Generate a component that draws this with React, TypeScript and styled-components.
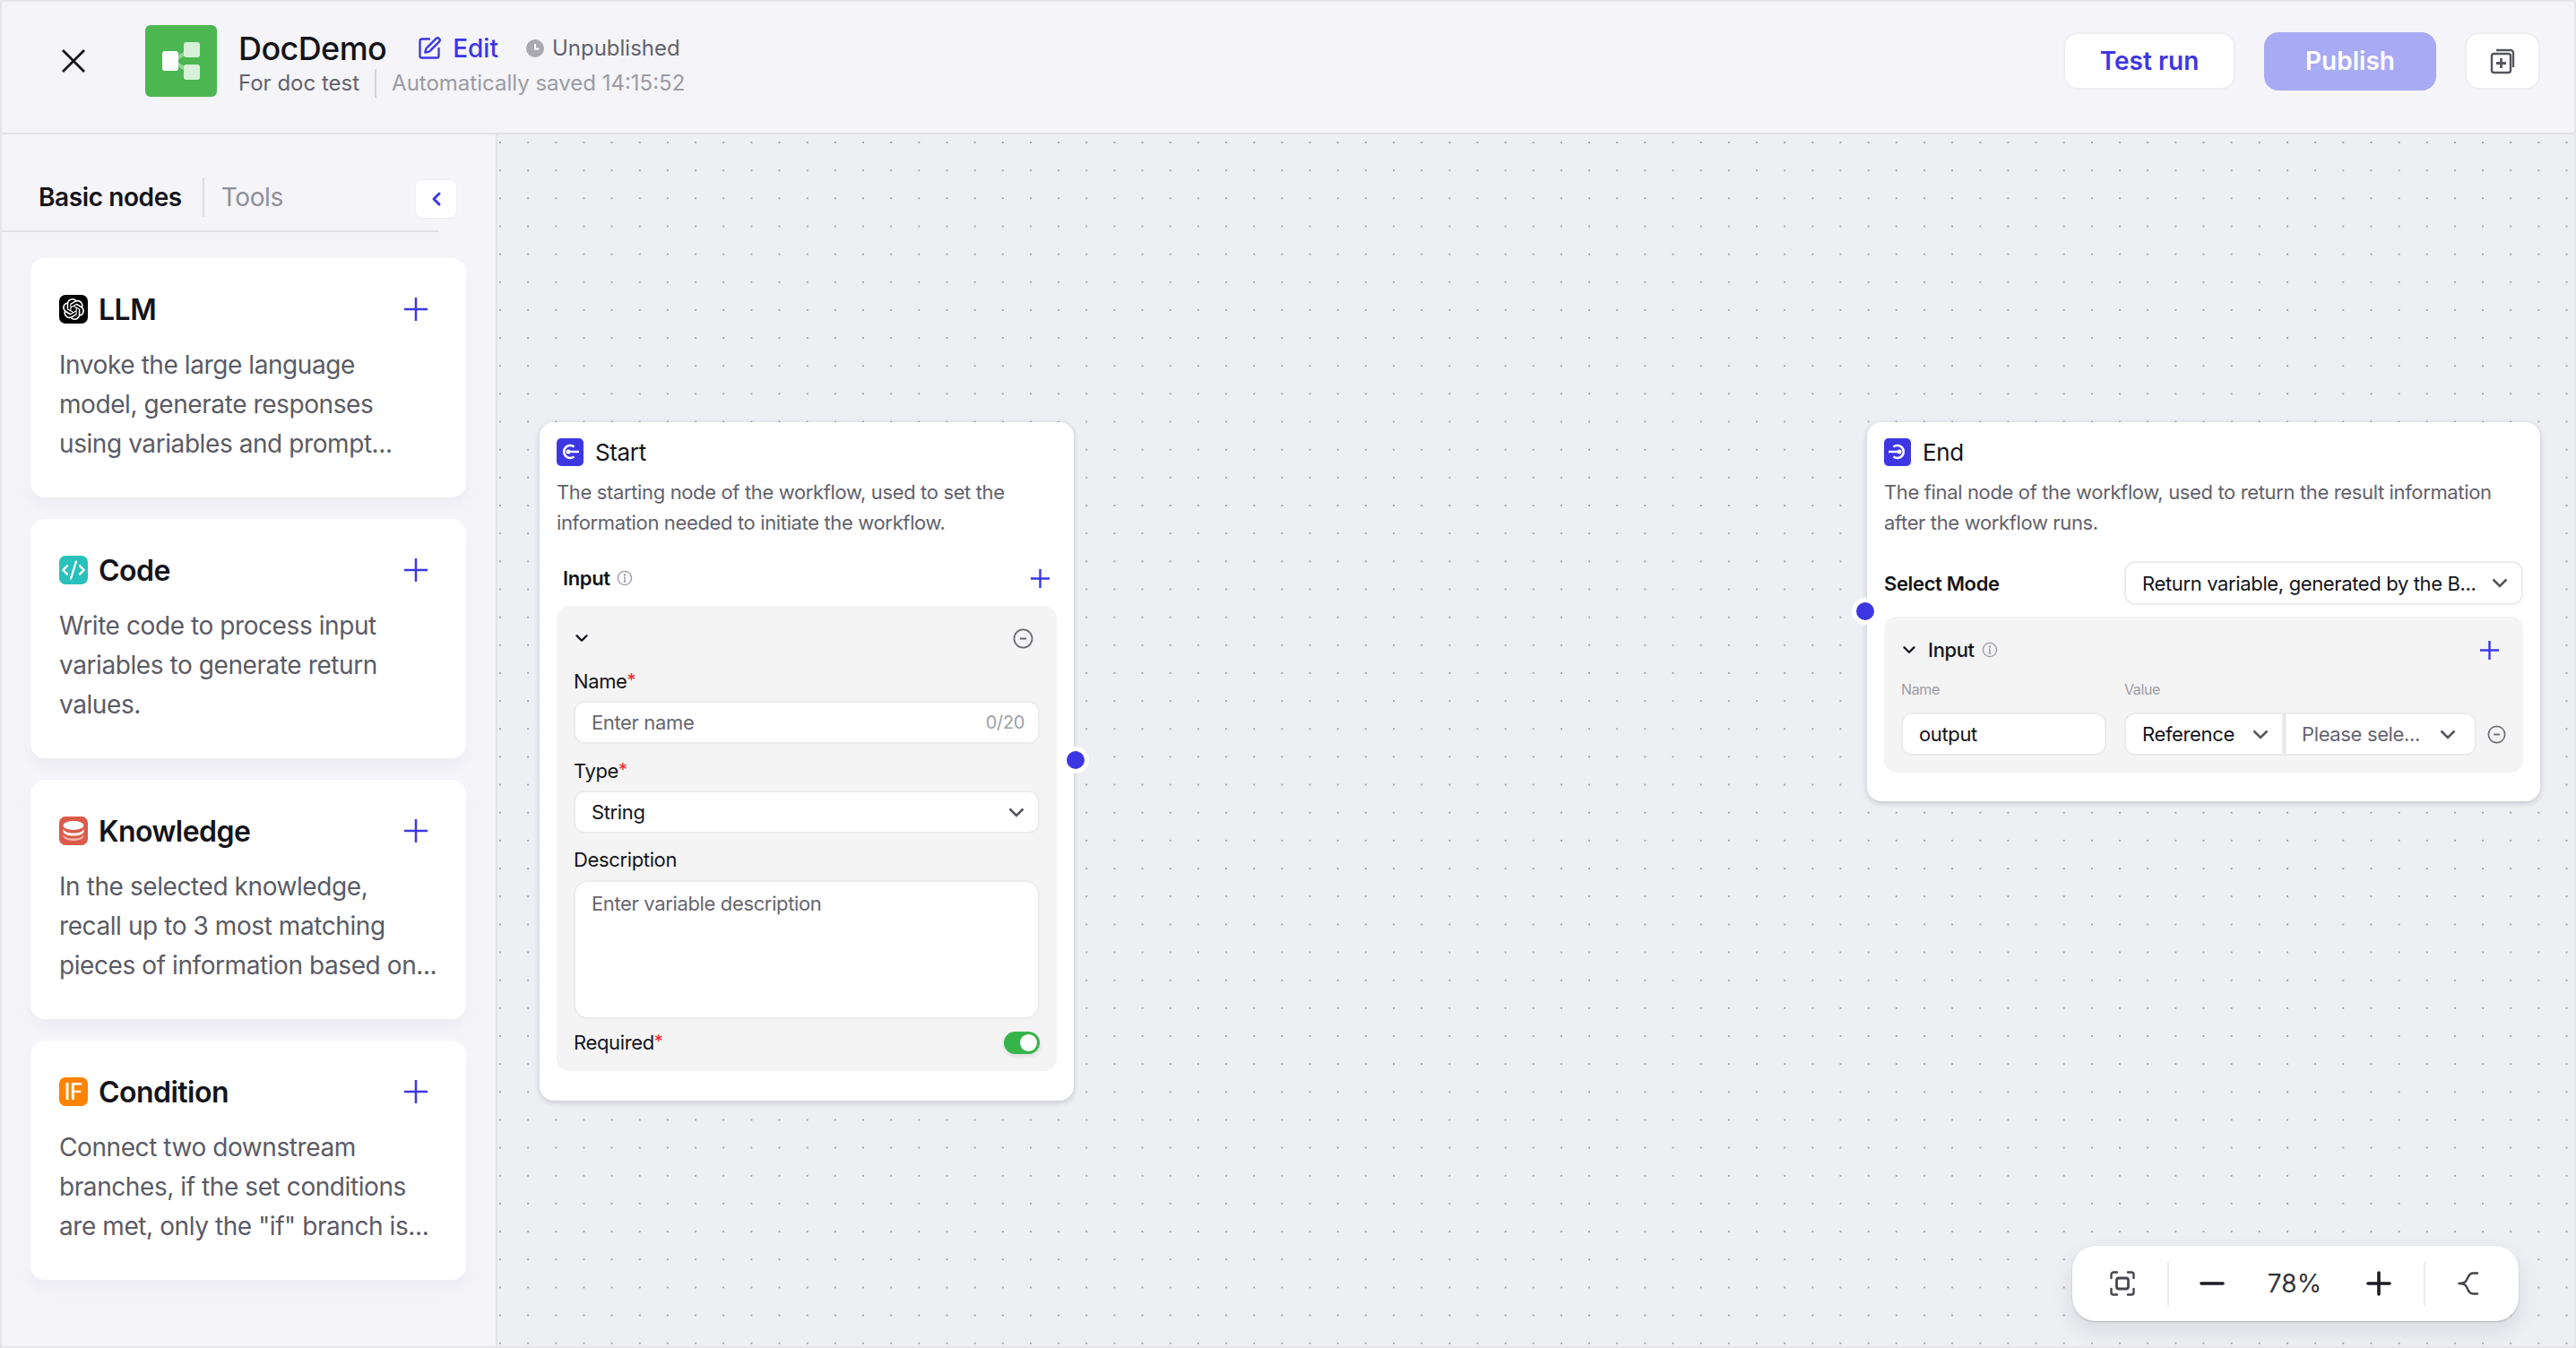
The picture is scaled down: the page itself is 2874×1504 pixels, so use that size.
import React from "react";
import styled, { createGlobalStyle } from "styled-components";
import { ChevronDown, ChevronLeft, CodeXml, SquarePen } from "lucide-react";
import { SiOpenai } from "react-icons/si";

const BLUE = "#3d37e3";

const GlobalStyle = createGlobalStyle`
  * { box-sizing: border-box; }
  html, body { margin: 0; padding: 0; background: #f4f4f9; }
  body { font-family: Inter, "Noto Sans", sans-serif; color: #14141a; }
`;

const Frame = styled.div`
  width: 2874px;
  height: 1504px;
  border: 2px solid #e6e6ea;
  display: flex;
  flex-direction: column;
  overflow: hidden;
`;

/* header */
const Header = styled.header`
  height: 148px;
  flex: none;
  display: flex;
  align-items: center;
  padding: 0 38px 14px 66px;
  background: #f4f4f9;
  border-bottom: 2px solid #e2e2e7;
`;

const CloseIcon = styled.svg`
  width: 28px;
  height: 28px;
  flex: none;
  margin-right: 66px;
`;

const Logo = styled.div`
  width: 80px;
  height: 80px;
  flex: none;
  border-radius: 6px;
  background: #4cb751;
  display: flex;
  align-items: center;
  justify-content: center;
`;

const TitleBlock = styled.div`
  margin: 10px 0 0 24px;
  display: flex;
  flex-direction: column;
  gap: 3px;
`;

const TitleRow = styled.div`
  height: 36px;
  display: flex;
  align-items: center;
`;

const AppName = styled.span`
  font-size: 36px;
  font-weight: 500;
  letter-spacing: -0.6px;
  color: #14141a;
`;

const EditLink = styled.span`
  display: flex;
  align-items: center;
  gap: 12px;
  margin-left: 34px;
  font-size: 28px;
  font-weight: 500;
  color: ${BLUE};
`;

const Status = styled.span`
  display: flex;
  align-items: center;
  gap: 9px;
  margin-left: 31px;
  font-size: 24px;
  color: #62626c;
`;

const SubRow = styled.div`
  height: 36px;
  display: flex;
  align-items: center;
  font-size: 24px;
`;

const SubText = styled.span<{ $muted?: boolean }>`
  color: ${(p) => (p.$muted ? "#9b9ba3" : "#62626c")};
`;

const SubDivider = styled.span`
  width: 2px;
  height: 32px;
  margin: 0 17px;
  background: #d4d4da;
`;

const HeaderActions = styled.div`
  margin-left: auto;
  display: flex;
  align-items: center;
  gap: 32px;
`;

const OutlineButton = styled.button`
  width: 192px;
  height: 64px;
  border: 2px solid #eeeef2;
  border-radius: 16px;
  background: #fff;
  color: ${BLUE};
  font: 600 28px Inter, sans-serif;
`;

const PublishButton = styled.button`
  width: 192px;
  height: 65px;
  border: 0;
  border-radius: 16px;
  background: #a8aaf3;
  color: #fff;
  font: 600 28px Inter, sans-serif;
`;

const SquareButton = styled.button`
  width: 84px;
  height: 64px;
  padding: 0;
  border: 2px solid #eeeef2;
  border-radius: 16px;
  background: #fff;
  display: flex;
  align-items: center;
  justify-content: center;
`;

/* body */
const Body = styled.div`
  flex: 1;
  min-height: 0;
  display: flex;
`;

const Sidebar = styled.aside`
  width: 553px;
  flex: none;
  background: #f4f4f9;
  border-right: 2px solid #e2e2e7;
`;

const TabRow = styled.div`
  width: 488px;
  height: 109px;
  padding: 48px 0 0 41px;
  display: flex;
  align-items: flex-start;
  border-bottom: 2px solid #e2e2e7;
`;

const Tab = styled.span<{ $active?: boolean }>`
  height: 44px;
  line-height: 44px;
  font-size: 28px;
  letter-spacing: -0.4px;
  font-weight: ${(p) => (p.$active ? 600 : 400)};
  color: ${(p) => (p.$active ? "#14141a" : "#8f8f98")};
`;

const TabDivider = styled.span`
  width: 2px;
  height: 44px;
  margin: 0 19px 0 23px;
  background: #dcdce1;
`;

const CollapseButton = styled.button`
  width: 47px;
  height: 44px;
  margin: 2px -20px 0 auto;
  padding: 0;
  border: 1px solid #eeeef2;
  border-radius: 8px;
  background: #fff;
  color: ${BLUE};
  display: flex;
  align-items: center;
  justify-content: center;
`;

const CardList = styled.div`
  margin: 29px 0 0 32px;
  width: 486px;
  display: flex;
  flex-direction: column;
  gap: 24px;
`;

const Card = styled.div`
  height: 267px;
  padding: 41px 43px 0 32px;
  background: #fff;
  border-radius: 16px;
  box-shadow: 0 10px 16px rgba(20, 20, 60, 0.035);
`;

const CardHead = styled.div`
  height: 32px;
  display: flex;
  align-items: center;
`;

const CardIcon = styled.span<{ $bg: string }>`
  width: 32px;
  height: 32px;
  flex: none;
  border-radius: 7px;
  background: ${(p) => p.$bg};
  color: #fff;
  display: flex;
  align-items: center;
  justify-content: center;
`;

const IfMark = styled.span`
  font-size: 25px;
  font-weight: 500;
  letter-spacing: -0.5px;
`;

const CardTitle = styled.span`
  margin-left: 12px;
  font-size: 32px;
  font-weight: 600;
  letter-spacing: -0.53px;
  color: #14141a;
`;

const PlusMark = styled.svg<{ $size: number; $end: number }>`
  width: ${(p) => p.$size}px;
  height: ${(p) => p.$size}px;
  flex: none;
  margin: 0 ${(p) => p.$end}px 0 auto;
`;

const CardText = styled.p`
  margin: 24px -30px 0 0;
  font-size: 28px;
  line-height: 44px;
  letter-spacing: -0.42px;
  white-space: pre-line;
  color: #5b5b65;
`;

/* canvas */
const Canvas = styled.main`
  position: relative;
  flex: 1;
  background-color: #eeeff3;
  background-image: radial-gradient(circle, #a6a6ae 0.8px, transparent 1.2px);
  background-size: 31.16px 31.16px;
  background-position: -12.6px -6.6px;
`;

const FlowNode = styled.section<{ $left: number; $top: number; $width: number; $bottom: number }>`
  position: absolute;
  left: ${(p) => p.$left}px;
  top: ${(p) => p.$top}px;
  width: ${(p) => p.$width}px;
  padding: 18px 19px ${(p) => p.$bottom}px;
  background: #fff;
  border-radius: 16px;
  letter-spacing: -0.36px;
  box-shadow: 0 2px 6px rgba(30, 30, 50, 0.2);
`;

const NodeHead = styled.div`
  height: 30px;
  display: flex;
  align-items: center;
  gap: 13px;
`;

const NodeName = styled.span`
  font-size: 26px;
  color: #14141a;
`;

const NodeText = styled.p`
  margin: 13px 0 0;
  font-size: 22px;
  line-height: 34px;
  color: #62626c;
`;

const SectionHead = styled.div`
  height: 30px;
  margin: 30px 0 16px;
  padding: 0 8px 0 7px;
  display: flex;
  align-items: center;
  gap: 7px;
`;

const StrongLabel = styled.span`
  font-size: 22px;
  font-weight: 600;
  color: #14141a;
`;

const Panel = styled.div<{ $top: number; $bottom: number }>`
  padding: ${(p) => p.$top}px 19px ${(p) => p.$bottom}px;
  background: #f4f4f5;
  border-radius: 14px;
`;

const PanelHead = styled.div`
  height: 24px;
  display: flex;
  align-items: center;
  justify-content: space-between;
  padding-right: 7px;
`;

const FoldChevron = styled(ChevronDown)`
  margin-left: -2px;
`;

const FieldLabel = styled.div<{ $top: number; $below?: number }>`
  height: 28px;
  margin: ${(p) => p.$top}px 0 ${(p) => p.$below ?? 8}px;
  line-height: 28px;
  font-size: 22px;
  color: #14141a;
`;

const Star = styled.sup`
  color: #f5222d;
  font-size: 20px;
  line-height: 0;
  vertical-align: 2px;
`;

const Field = styled.div<{ $tall?: boolean; $muted?: boolean }>`
  height: ${(p) => (p.$tall ? 155 : 48)}px;
  padding: ${(p) => (p.$tall ? "9px" : "0")} 15px 0 18px;
  display: flex;
  align-items: ${(p) => (p.$tall ? "flex-start" : "center")};
  justify-content: space-between;
  background: #fff;
  border: 2px solid #ececef;
  border-radius: ${(p) => (p.$tall ? 16 : 12)}px;
  font-size: 22px;
  line-height: 30px;
  color: ${(p) => (p.$muted ? "#66666f" : "#14141a")};
`;

const Counter = styled.span`
  font-size: 20px;
  color: #a0a0a8;
`;

const SwitchRow = styled.div`
  height: 28px;
  margin-top: 12px;
  display: flex;
  align-items: center;
  justify-content: space-between;
  font-size: 22px;
  color: #14141a;
`;

const Switch = styled.span`
  width: 40px;
  height: 25px;
  padding: 3px;
  display: flex;
  justify-content: flex-end;
  background: #36b44a;
  border-radius: 13px;
  box-shadow: 0 2px 5px rgba(0, 0, 0, 0.12);
`;

const SwitchKnob = styled.span`
  width: 19px;
  height: 19px;
  border-radius: 50%;
  background: #fff;
`;

const Handle = styled.span<{ $side: "left" | "right"; $top: number }>`
  position: absolute;
  ${(p) => p.$side}: -12px;
  top: ${(p) => p.$top}px;
  width: 20px;
  height: 20px;
  border-radius: 50%;
  background: ${BLUE};
  box-shadow: 0 0 0 5px #fff;
`;

const ModeRow = styled.div`
  margin: 26px 0 13px;
  display: grid;
  grid-template-columns: 268px 1fr;
  align-items: center;
`;

const SelectBox = styled.div<{ $tall?: boolean; $grow?: number; $join?: "left" | "right"; $muted?: boolean }>`
  height: ${(p) => (p.$tall ? 49 : 48)}px;
  flex: ${(p) => (p.$grow ? `0 0 ${p.$grow}px` : "1")};
  min-width: 0;
  padding: 0 ${(p) => (p.$join === "right" ? 21 : 15)}px 0 18px;
  display: flex;
  align-items: center;
  justify-content: space-between;
  background: #fff;
  border: 2px solid #ececef;
  border-radius: ${(p) =>
    p.$join === "left" ? "12px 0 0 12px" : p.$join === "right" ? "0 12px 12px 0" : "12px"};
  ${(p) => (p.$join === "right" ? "border-left: 0;" : "")}
  font-size: 22px;
  color: ${(p) => (p.$muted ? "#66666f" : "#14141a")};
  white-space: nowrap;
`;

const InputHead = styled.div`
  height: 24px;
  display: flex;
  align-items: center;
  gap: 8px;
`;

const InputHeadLabel = styled.span`
  font-size: 22px;
  font-weight: 500;
  margin-left: 2px;
`;

const ValueGrid = styled.div`
  display: grid;
  grid-template-columns: 229px 1fr;
  column-gap: 20px;
  margin-top: 22px;
`;

const SmallLabel = styled.span`
  height: 20px;
  margin-bottom: 16px;
  line-height: 20px;
  font-size: 16px;
  color: #9b9ba3;
`;

const ValueRow = styled.div`
  display: flex;
  align-items: center;
`;

const JoinDivider = styled.span`
  width: 2px;
  height: 48px;
  background: #e4e4e8;
`;

const RowRemove = styled.span`
  margin-left: 12px;
  display: flex;
`;

const ZoomBar = styled.div`
  position: absolute;
  right: 62px;
  bottom: 28px;
  width: 498px;
  height: 84px;
  display: flex;
  align-items: center;
  background: #fff;
  border-radius: 26px;
  box-shadow: 0 1px 2px rgba(0, 0, 0, 0.2), 0 10px 24px rgba(30, 30, 50, 0.1);
`;

const ZoomSlot = styled.span<{ $width: number; $pl?: number; $pr?: number }>`
  width: ${(p) => p.$width}px;
  padding: 0 ${(p) => p.$pr ?? 0}px 0 ${(p) => p.$pl ?? 0}px;
  display: flex;
  align-items: center;
  justify-content: center;
  font-size: 28px;
  color: #33333a;
`;

const ZoomDivider = styled.span`
  width: 2px;
  height: 50px;
  background: #ececef;
`;

const PlusIcon: React.FC<{ size: number; end?: number }> = ({ size, end = 0 }) => (
  <PlusMark $size={size} $end={end} viewBox="0 0 26 26" fill="none" stroke={BLUE} strokeWidth={size > 22 ? 2.5 : 3}>
    <path d="M0 13h26M13 0v26" />
  </PlusMark>
);

const InfoIcon = () => (
  <svg width="18" height="18" viewBox="0 0 18 18" fill="none" stroke="#9b9ba3" strokeWidth="1.4">
    <circle cx="9" cy="9" r="7.6" />
    <path d="M9 8v5M7.8 13h2.4M8 8h1" />
    <circle cx="9" cy="5.4" r=".5" />
  </svg>
);

const MinusCircle: React.FC<{ size: number }> = ({ size }) => (
  <svg width={size} height={size} viewBox="0 0 22 22" fill="none" stroke="#6b6b74" strokeWidth="1.7">
    <circle cx="11" cy="11" r="9.6" />
    <path d="M7.5 11h7" strokeWidth="2" />
  </svg>
);

const Chevron: React.FC<{ color?: string }> = ({ color = "#55555e" }) => (
  <svg width="18" height="11" viewBox="0 0 18 11" fill="none" stroke={color} strokeWidth="2.6">
    <path d="M1.5 1.5 9 9l7.5-7.5" />
  </svg>
);

const DocLogo = () => (
  <svg width="46" height="46" viewBox="0 0 46 46">
    <path d="M14 23 34 10M14 23l20 13" stroke="#8fd694" strokeWidth="4" />
    <rect x="26" y="2" width="18" height="17" rx="3" fill="#d7f0d8" />
    <rect x="26" y="27" width="18" height="17" rx="3" fill="#d7f0d8" />
    <rect x="2" y="12" width="18" height="22" rx="3" fill="#fff" />
  </svg>
);

const ClockIcon = () => (
  <svg width="20" height="20" viewBox="0 0 20 20">
    <circle cx="10" cy="10" r="10" fill="#a8a8ae" />
    <path d="M10 5v5.6h4.4" fill="none" stroke="#fff" strokeWidth="2" />
  </svg>
);

const CopyAddIcon = () => (
  <svg width="30" height="30" viewBox="0 0 30 30" fill="none" stroke="#55555e" strokeWidth="2.4">
    <path d="M8 3h16a3 3 0 0 1 3 3v16" />
    <rect x="3" y="7" width="21" height="21" rx="2.5" />
    <path d="M13.5 12v11M8 17.5h11" strokeWidth="2.8" />
  </svg>
);

const StackIcon = () => (
  <svg width="26" height="24" viewBox="0 0 26 24">
    <ellipse cx="13" cy="6" rx="11.5" ry="5" fill="#fff" />
    <path d="M1.5 10c1 3 6 4.6 11.5 4.6S23.500 13 24.500 10v3c-1 3-6 4.600-11.500 4.600S2.500 16 1.500 13z" fill="#fff" />
    <path d="M1.500 16c1 3 6 4.600 11.500 4.600S23.500 19 24.500 16v2c-1 3.400-6 5-11.500 5S2.500 21.400 1.500 18z" fill="#f0b6ac" />
  </svg>
);

const NodeGlyph = styled.span<{ $end?: boolean }>`
  width: 30px;
  height: 31px;
  flex: none;
  border-radius: 5px;
  background: ${BLUE};
  display: flex;
  align-items: center;
  justify-content: center;
  transform: ${(p) => (p.$end ? "scaleX(-1)" : "none")};
`;

const PortIcon: React.FC<{ end?: boolean }> = ({ end }) => (
  <NodeGlyph $end={end}>
    <svg width="20" height="20" viewBox="0 0 20 20" fill="none" stroke="#fff">
      <path d="M14.500 4.500a7 7 0 1 0 0 11" strokeWidth="2.600" />
      <path d="M7 10h13" strokeWidth="2.400" />
      <circle cx="8" cy="10" r="2.500" fill="#fff" stroke="none" />
    </svg>
  </NodeGlyph>
);

const FitIcon = () => (
  <svg width="28" height="28" viewBox="0 0 28 28" fill="none" stroke="#44444c" strokeWidth="2.400" strokeLinecap="round">
    <path d="M1.500 8V4a2.500 2.500 0 0 1 2.500-2.500h4M20 1.500h4A2.500 2.500 0 0 1 26.500 4v4M26.500 20v4a2.500 2.500 0 0 1-2.500 2.500h-4M8 26.500H4A2.500 2.500 0 0 1 1.500 24v-4" />
    <rect x="7.500" y="8" width="13" height="12" rx="2.500" strokeWidth="2.800" />
  </svg>
);

const ZoomStroke: React.FC<{ plus?: boolean }> = ({ plus }) => (
  <svg width="28" height="28" viewBox="0 0 28 28" fill="none" stroke="#1c1c22" strokeWidth="3.600" strokeLinecap="round">
    <path d={plus ? "M2 14h24M14 2v24" : "M2 14h24"} />
  </svg>
);

const BranchIcon = () => (
  <svg width="24" height="26" viewBox="0 0 24 26" fill="none" stroke="#44444c" strokeWidth="2.400" strokeLinecap="round">
    <path d="M22 1.500h-5C13 1.500 12 5 10 9c-1 2.500-3 4-8.500 4M22 24.500h-5c-4 0-5-3.500-7-7.500-1-2.500-3-4-8.500-4" />
  </svg>
);

const cards = [
  {
    title: "LLM",
    bg: "#000",
    icon: <SiOpenai size={24} />,
    text: "Invoke the large language\nmodel, generate responses\nusing variables and prompt...",
  },
  {
    title: "Code",
    bg: "#2ac1bc",
    icon: <CodeXml size={28} strokeWidth={2} />,
    text: "Write code to process input\nvariables to generate return\nvalues.",
  },
  {
    title: "Knowledge",
    bg: "#db5b4a",
    icon: <StackIcon />,
    text: "In the selected knowledge,\nrecall up to 3 most matching\npieces of information based on...",
  },
  {
    title: "Condition",
    bg: "#ff8200",
    icon: <IfMark>IF</IfMark>,
    text: 'Connect two downstream\nbranches, if the set conditions\nare met, only the "if" branch is...',
  },
];

export default function App() {
  return (
    <>
      <GlobalStyle />
      <Frame>
        <Header>
          <CloseIcon viewBox="0 0 28 28" fill="none" stroke="#14141a" strokeWidth="2.800">
            <path d="M2 2l24 24M26 2 2 26" />
          </CloseIcon>
          <Logo>
            <DocLogo />
          </Logo>
          <TitleBlock>
            <TitleRow>
              <AppName>DocDemo</AppName>
              <EditLink>
                <SquarePen size={28} strokeWidth={2} />
                Edit
              </EditLink>
              <Status>
                <ClockIcon />
                Unpublished
              </Status>
            </TitleRow>
            <SubRow>
              <SubText>For doc test</SubText>
              <SubDivider />
              <SubText $muted>Automatically saved 14:15:52</SubText>
            </SubRow>
          </TitleBlock>
          <HeaderActions>
            <OutlineButton>Test run</OutlineButton>
            <PublishButton>Publish</PublishButton>
            <SquareButton>
              <CopyAddIcon />
            </SquareButton>
          </HeaderActions>
        </Header>
        <Body>
          <Sidebar>
            <TabRow>
              <Tab $active>Basic nodes</Tab>
              <TabDivider />
              <Tab>Tools</Tab>
              <CollapseButton>
                <ChevronLeft size={24} strokeWidth={3} />
              </CollapseButton>
            </TabRow>
            <CardList>
              {cards.map((card) => (
                <Card key={card.title}>
                  <CardHead>
                    <CardIcon $bg={card.bg}>{card.icon}</CardIcon>
                    <CardTitle>{card.title}</CardTitle>
                    <PlusIcon size={26} />
                  </CardHead>
                  <CardText>{card.text}</CardText>
                </Card>
              ))}
            </CardList>
          </Sidebar>
          <Canvas>
            <FlowNode $left={47} $top={321} $width={596} $bottom={33}>
              <NodeHead>
                <PortIcon />
                <NodeName>Start</NodeName>
              </NodeHead>
              <NodeText>
                The starting node of the workflow, used to set the information needed to initiate the workflow.
              </NodeText>
              <SectionHead>
                <StrongLabel>Input</StrongLabel>
                <InfoIcon />
                <PlusIcon size={21} />
              </SectionHead>
              <Panel $top={24} $bottom={18}>
                <PanelHead>
                  <FoldChevron size={22} strokeWidth={2.6} color="#14141a" />
                  <MinusCircle size={23} />
                </PanelHead>
                <FieldLabel $top={22}>
                  Name<Star>*</Star>
                </FieldLabel>
                <Field $muted>
                  Enter name
                  <Counter>0/20</Counter>
                </Field>
                <FieldLabel $top={16}>
                  Type<Star>*</Star>
                </FieldLabel>
                <Field>
                  String
                  <Chevron />
                </Field>
                <FieldLabel $top={15} $below={9}>
                  Description
                </FieldLabel>
                <Field $tall $muted>
                  Enter variable description
                </Field>
                <SwitchRow>
                  <span>
                    Required<Star>*</Star>
                  </span>
                  <Switch>
                    <SwitchKnob />
                  </Switch>
                </SwitchRow>
              </Panel>
              <Handle $side="right" $top={367} />
            </FlowNode>

            <FlowNode $left={1528} $top={321} $width={751} $bottom={32}>
              <NodeHead>
                <PortIcon end />
                <NodeName>End</NodeName>
              </NodeHead>
              <NodeText>
                The final node of the workflow, used to return the result information after the workflow runs.
              </NodeText>
              <ModeRow>
                <StrongLabel>Select Mode</StrongLabel>
                <SelectBox $tall>
                  Return variable, generated by the B...
                  <Chevron />
                </SelectBox>
              </ModeRow>
              <Panel $top={25} $bottom={19}>
                <InputHead>
                  <FoldChevron size={22} strokeWidth={2.6} color="#14141a" />
                  <InputHeadLabel>Input</InputHeadLabel>
                  <InfoIcon />
                  <PlusIcon size={21} end={8} />
                </InputHead>
                <ValueGrid>
                  <SmallLabel>Name</SmallLabel>
                  <SmallLabel>Value</SmallLabel>
                  <Field>output</Field>
                  <ValueRow>
                    <SelectBox $grow={178} $join="left">
                      Reference
                      <Chevron />
                    </SelectBox>
                    <JoinDivider />
                    <SelectBox $join="right" $muted>
                      Please sele...
                      <Chevron />
                    </SelectBox>
                    <RowRemove>
                      <MinusCircle size={21} />
                    </RowRemove>
                  </ValueRow>
                </ValueGrid>
              </Panel>
              <Handle $side="left" $top={201} />
            </FlowNode>

            <ZoomBar>
              <ZoomSlot $width={106} $pl={6}>
                <FitIcon />
              </ZoomSlot>
              <ZoomDivider />
              <ZoomSlot $width={96}>
                <ZoomStroke />
              </ZoomSlot>
              <ZoomSlot $width={88}>78%</ZoomSlot>
              <ZoomSlot $width={100}>
                <ZoomStroke plus />
              </ZoomSlot>
              <ZoomDivider />
              <ZoomSlot $width={104} $pr={8}>
                <BranchIcon />
              </ZoomSlot>
            </ZoomBar>
          </Canvas>
        </Body>
      </Frame>
    </>
  );
}
